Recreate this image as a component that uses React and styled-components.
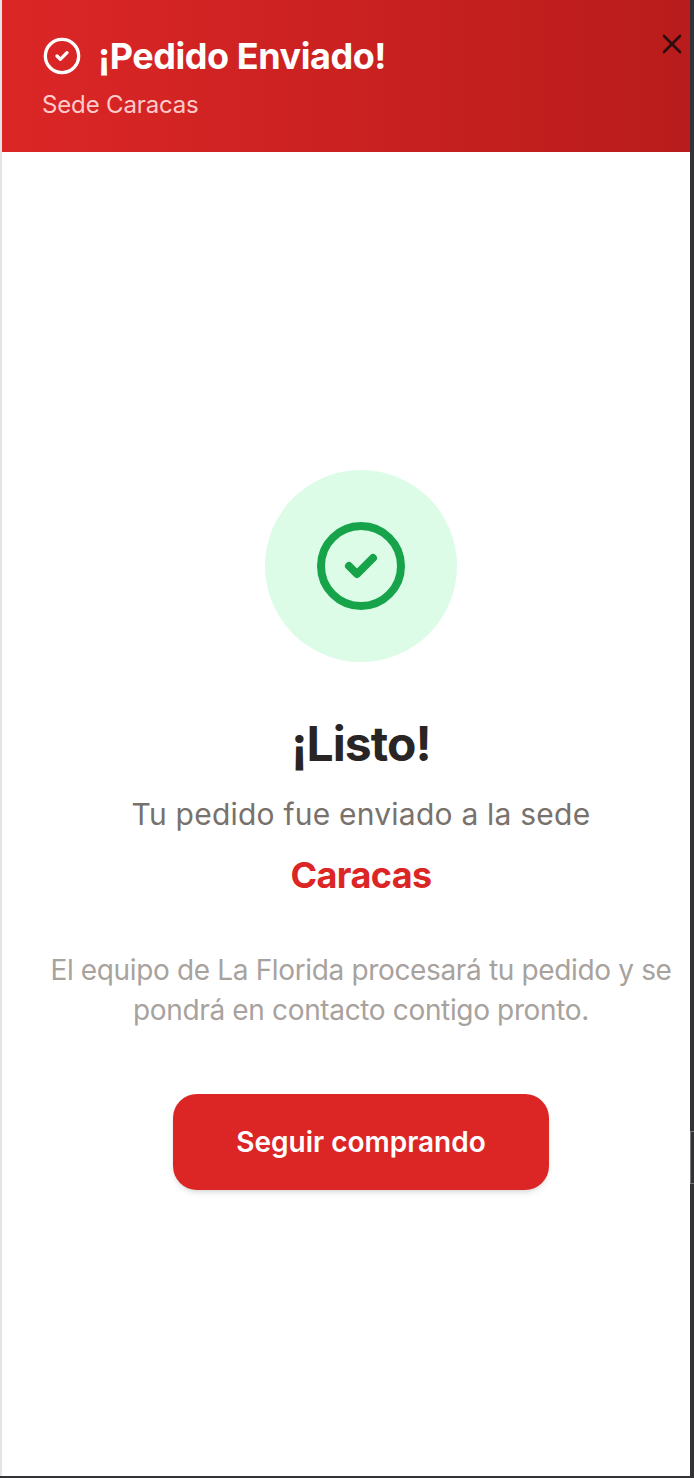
import React from "react";
import styled, { createGlobalStyle } from "styled-components";
import { CircleCheck, X } from "lucide-react";

const GlobalStyle = createGlobalStyle`
  html, body {
    margin: 0;
    padding: 0;
    background: #333336;
  }
  * {
    box-sizing: border-box;
  }
`;

const Frame = styled.div`
  position: relative;
  width: 694px;
  height: 1478px;
  padding: 0 4px 2px 0;
  background: #333336;
  font-family: Inter, "Liberation Sans", sans-serif;
`;

const EdgeHandle = styled.div`
  position: absolute;
  top: 1131px;
  right: 0;
  width: 4px;
  height: 53px;
  border: 1px solid #77777a;
  border-right: 0;
`;

const Panel = styled.div`
  position: relative;
  display: flex;
  flex-direction: column;
  height: 100%;
  background: #ffffff;
  border-left: 2px solid #e4e4e4;
`;

const Header = styled.header`
  flex: none;
  height: 152px;
  padding: 36px 40px 0;
  background: linear-gradient(90deg, #dc2626 0%, #b91c1c 100%);
`;

const TitleRow = styled.div`
  display: flex;
  align-items: center;
  gap: 16px;
  height: 40px;
  color: #ffffff;
`;

const Title = styled.h2`
  margin: 0;
  font-size: 36px;
  line-height: 40px;
  font-weight: 700;
  letter-spacing: -0.45px;
`;

const Subtitle = styled.p`
  margin: 13px 0 0;
  font-size: 24px;
  line-height: 32px;
  letter-spacing: -0.15px;
  color: #fecaca;
`;

const CloseButton = styled.button`
  position: absolute;
  top: 28px;
  right: 2px;
  display: flex;
  width: 32px;
  height: 32px;
  padding: 0;
  border: 0;
  background: none;
  color: #0a0a0a;
  opacity: 0.8;
`;

const Body = styled.main`
  flex: 1;
  display: flex;
  flex-direction: column;
  align-items: center;
  justify-content: center;
  padding: 32px 14px 0 44px;
  text-align: center;
`;

const IconCircle = styled.div`
  display: flex;
  align-items: center;
  justify-content: center;
  width: 192px;
  height: 192px;
  margin-bottom: 50px;
  border-radius: 50%;
  background: #dcfce7;
  color: #16a34a;
`;

const Heading = styled.h1`
  margin: 0 0 18px;
  font-size: 48px;
  line-height: 64px;
  font-weight: 700;
  letter-spacing: -0.9px;
  color: #292524;
`;

const Lead = styled.p`
  margin: 0 0 12px;
  font-size: 30px;
  line-height: 40px;
  letter-spacing: 0.22px;
  color: #78716c;
`;

const Branch = styled.p`
  margin: 0 0 46px;
  font-size: 36px;
  line-height: 58px;
  font-weight: 700;
  letter-spacing: -0.6px;
  color: #dc2626;
`;

const Note = styled.p`
  margin: 0 0 64px;
  font-size: 28px;
  line-height: 40px;
  letter-spacing: -0.35px;
  color: #a8a29e;
`;

const PrimaryButton = styled.button`
  width: 376px;
  height: 96px;
  border: 0;
  border-radius: 24px;
  background: #dc2626;
  color: #ffffff;
  font-family: inherit;
  font-size: 28px;
  font-weight: 600;
  box-shadow: 0 4px 6px -1px rgba(0, 0, 0, 0.1), 0 2px 4px -2px rgba(0, 0, 0, 0.1);
`;

export default function App() {
  return (
    <Frame>
      <GlobalStyle />
      <Panel>
        <Header>
          <TitleRow>
            <CircleCheck size={40} />
            <Title>¡Pedido Enviado!</Title>
          </TitleRow>
          <Subtitle>Sede Caracas</Subtitle>
        </Header>
        <CloseButton aria-label="Cerrar">
          <X size={32} />
        </CloseButton>
        <Body>
          <IconCircle>
            <CircleCheck size={96} />
          </IconCircle>
          <Heading>¡Listo!</Heading>
          <Lead>Tu pedido fue enviado a la sede</Lead>
          <Branch>Caracas</Branch>
          <Note>
            El equipo de La Florida procesará tu pedido y se pondrá en contacto contigo pronto.
          </Note>
          <PrimaryButton>Seguir comprando</PrimaryButton>
        </Body>
      </Panel>
      <EdgeHandle />
    </Frame>
  );
}
